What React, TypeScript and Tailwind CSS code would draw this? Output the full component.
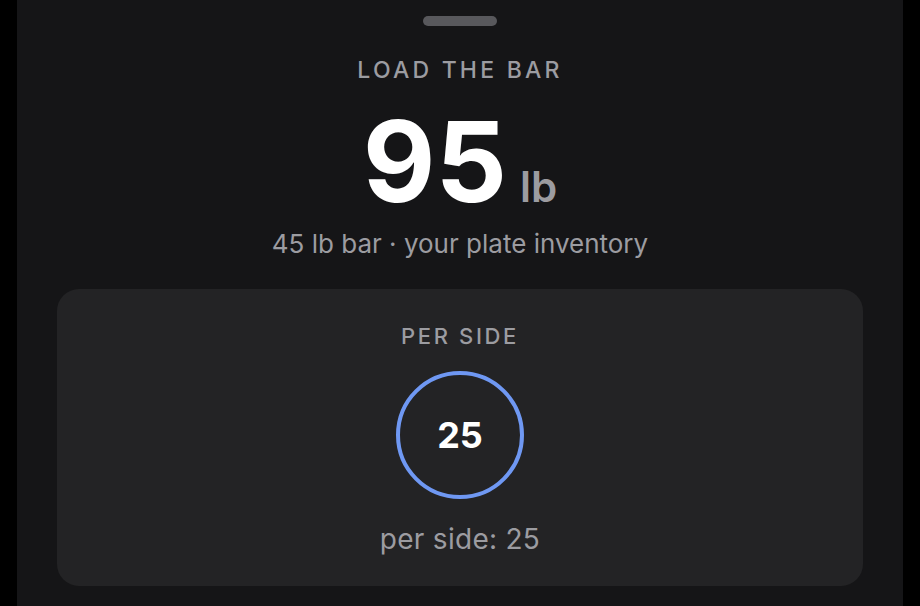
// Load the bar — plate calculator sheet
export default function App() {
  return (
    <div
      className="flex h-[606px] w-[920px] justify-center bg-black"
      style={{ fontFamily: "Inter, 'Liberation Sans', sans-serif" }}
    >
      <div className="flex w-[886px] flex-col items-center bg-[#151517]">
        {/* Grabber */}
        <div className="mt-4 h-[10px] w-[74px] rounded-full bg-[#58585c]" />

        {/* Header */}
        <div className="mt-[30px] text-[23px] leading-[28px] font-medium tracking-[0.14em] text-[#9c9ca1]">
          LOAD THE BAR
        </div>
        <div className="mt-[22px] flex items-baseline gap-[13px]">
          <span className="text-[112px] leading-[110px] font-bold text-white">95</span>
          <span className="text-[42px] leading-none font-semibold text-[#9c9ca1]">lb</span>
        </div>
        <div className="mt-[12px] text-[26px] leading-[32px] text-[#9c9ca1]">
          45 lb bar · your plate inventory
        </div>

        {/* Per side card */}
        <div className="mt-[29px] flex h-[297px] w-[806px] flex-col items-center rounded-[22px] bg-[#232325]">
          <div className="mt-[34px] text-[22px] leading-[26px] font-medium tracking-[0.12em] text-[#9c9ca1]">
            PER SIDE
          </div>
          <div className="mt-[22px] flex h-[128px] w-[128px] items-center justify-center rounded-full border-[4.5px] border-[#6f98f3]">
            <span className="text-[36px] font-bold text-white">25</span>
          </div>
          <div className="mt-[23px] text-[28px] leading-[34px] tracking-[0.01em] text-[#9c9ca1]">per side: 25</div>
        </div>
      </div>
    </div>
  );
}
